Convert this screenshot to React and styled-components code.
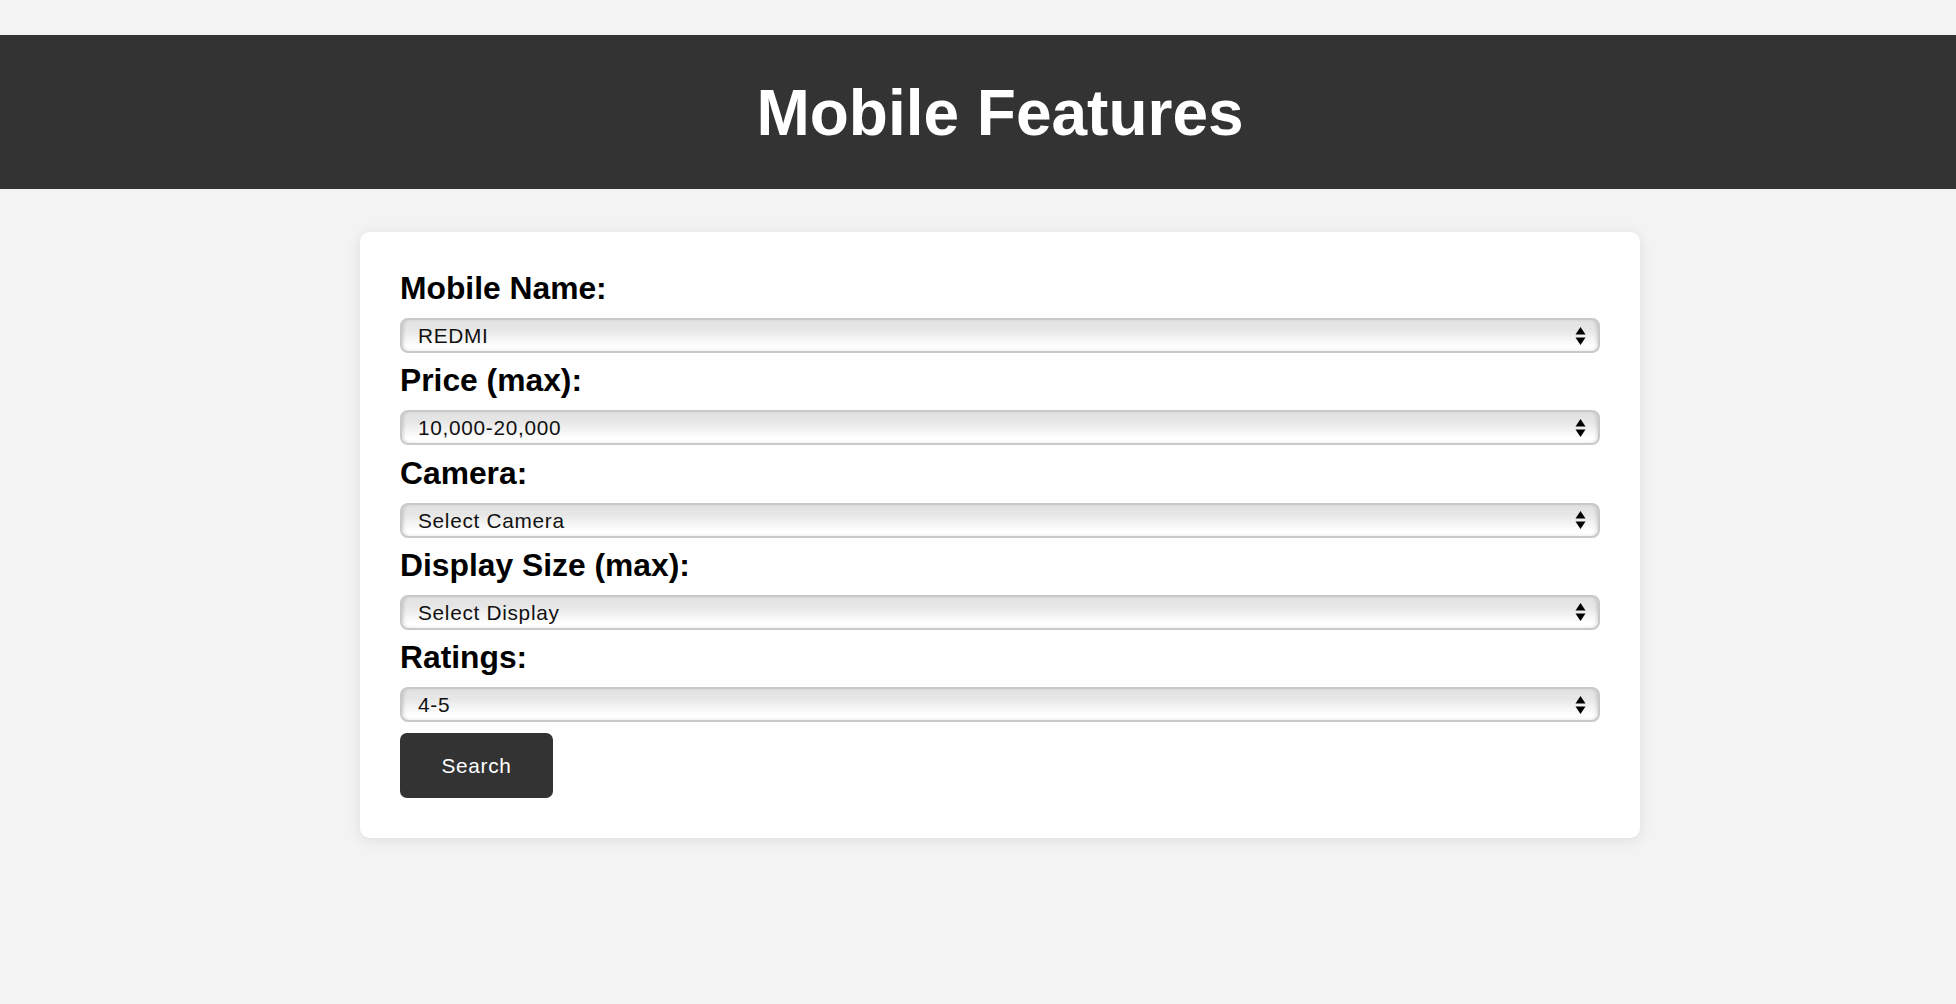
import React, { useState } from "react";
import styled, { createGlobalStyle } from "styled-components";

const GlobalStyle = createGlobalStyle`
  html, body {
    margin: 0;
    padding: 0;
    background: #f3f3f3;
    font-family: "Liberation Sans", Arial, sans-serif;
    overflow-x: hidden;
  }
`;

const Page = styled.div`
  padding-top: 35px;
  min-height: 969px;
`;

const Header = styled.header`
  background: #333333;
  height: 154px;
  display: flex;
  align-items: center;
  justify-content: center;
  padding-left: 44px;
`;

const Title = styled.h1`
  margin: 0;
  color: #ffffff;
  font-size: 64px;
  font-weight: 700;
  line-height: 1;
  padding-top: 2px;
`;

const Main = styled.main`
  padding: 43px 0 0 44px;
`;

const Card = styled.form`
  width: 1280px;
  box-sizing: border-box;
  margin: 0 auto;
  background: #ffffff;
  border-radius: 10px;
  padding: 40px 40px 40px;
  box-shadow: 0 2px 14px rgba(0, 0, 0, 0.09);
`;

const Label = styled.label`
  display: block;
  font-size: 31.8px;
  font-weight: 700;
  color: #000;
  line-height: 32px;
`;

const SelectWrap = styled.div`
  position: relative;
  margin: 14px 0 11.3px;
  height: 35px;
`;

const Select = styled.select`
  appearance: none;
  -webkit-appearance: none;
  width: 100%;
  height: 35px;
  box-sizing: border-box;
  border: 2px solid #c9c9c9;
  border-radius: 8px;
  padding: 0 40px 0 16px;
  font-family: "Liberation Sans", Arial, sans-serif;
  font-size: 20.8px;
  letter-spacing: 0.7px;
  color: #111;
  background: linear-gradient(
    to bottom,
    #e2e2e2 0%,
    #e6e6e6 30%,
    #f4f4f4 60%,
    #ffffff 85%,
    #fafafa 100%
  );
  box-shadow: inset 3px 0 3px -1px rgba(0, 0, 0, 0.12),
    inset -3px 0 3px -1px rgba(0, 0, 0, 0.1);
  outline: none;
  cursor: pointer;
`;

const Arrows = styled.svg`
  position: absolute;
  right: 14px;
  top: 50%;
  transform: translateY(-50%);
  pointer-events: none;
`;

const Button = styled.button`
  display: block;
  width: 153px;
  height: 65px;
  border: none;
  border-radius: 7px;
  background: #333333;
  color: #ffffff;
  font-family: "Liberation Sans", Arial, sans-serif;
  font-size: 20.8px;
  letter-spacing: 0.7px;
  cursor: pointer;
  padding: 0;
`;

const fields = [
  {
    id: "name",
    label: "Mobile Name:",
    value: "REDMI",
    options: ["Select Mobile", "REDMI", "SAMSUNG", "APPLE", "ONEPLUS", "VIVO", "OPPO"],
  },
  {
    id: "price",
    label: "Price (max):",
    value: "10,000-20,000",
    options: ["Select Price", "0-10,000", "10,000-20,000", "20,000-30,000", "30,000+"],
  },
  {
    id: "camera",
    label: "Camera:",
    value: "Select Camera",
    options: ["Select Camera", "12MP", "48MP", "64MP", "108MP"],
  },
  {
    id: "display",
    label: "Display Size (max):",
    value: "Select Display",
    options: ["Select Display", "5.5\"", "6.0\"", "6.5\"", "6.7\""],
  },
  {
    id: "ratings",
    label: "Ratings:",
    value: "4-5",
    options: ["Select Ratings", "1-2", "2-3", "3-4", "4-5"],
  },
];

function ArrowIcon() {
  return (
    <Arrows width="11" height="19" viewBox="0 0 11 19">
      <path d="M5.5 0.5 L10.5 8 L0.5 8 Z" fill="#000" />
      <path d="M0.5 11 L10.5 11 L5.5 18.5 Z" fill="#000" />
    </Arrows>
  );
}

export default function App() {
  const [values, setValues] = useState(
    Object.fromEntries(fields.map((f) => [f.id, f.value]))
  );

  return (
    <Page>
      <GlobalStyle />
      <Header>
        <Title>Mobile Features</Title>
      </Header>
      <Main>
        <Card onSubmit={(e) => e.preventDefault()}>
          {fields.map((f) => (
            <div key={f.id}>
              <Label htmlFor={f.id}>{f.label}</Label>
              <SelectWrap>
                <Select
                  id={f.id}
                  value={values[f.id]}
                  onChange={(e) =>
                    setValues({ ...values, [f.id]: e.target.value })
                  }
                >
                  {f.options.map((o) => (
                    <option key={o} value={o}>
                      {o}
                    </option>
                  ))}
                </Select>
                <ArrowIcon />
              </SelectWrap>
            </div>
          ))}
          <Button type="submit">Search</Button>
        </Card>
      </Main>
    </Page>
  );
}
